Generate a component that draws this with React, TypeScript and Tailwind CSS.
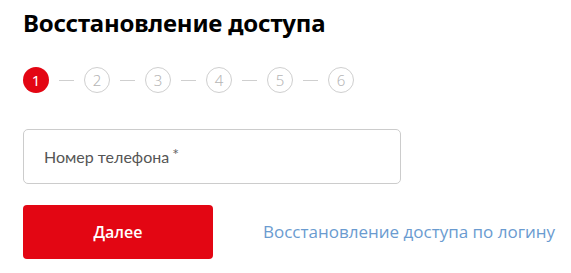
import React from "react";

export default function App() {
  const steps = [1, 2, 3, 4, 5, 6];
  return (
    <div className="w-[571px] h-[273px] bg-white pl-[23px] pt-[6px] overflow-hidden" style={{ fontFamily: "'Open Sans', sans-serif" }}>
      <h1 className="text-[24px] font-bold leading-[34px] text-black tracking-[-0.2px]" style={{ fontFamily: "'Noto Sans', sans-serif" }}>
        Восстановление доступа
      </h1>
      <div className="flex items-center mt-[27px] h-[26px]">
        {steps.map((s, i) => (
          <React.Fragment key={s}>
            {i > 0 && <div className="w-[15px] h-px bg-[#cfcfcf] mx-[10px]" />}
            {i === 0 ? (
              <div className="w-[26px] h-[26px] rounded-full bg-[#e30613] text-white flex items-center justify-center text-[15px]" style={{ fontFamily: "'Noto Sans', sans-serif" }}>
                {s}
              </div>
            ) : (
              <div className="w-[26px] h-[26px] rounded-full border border-[#cfcfcf] text-[#b5b5b5] flex items-center justify-center text-[15px] font-light" style={{ fontFamily: "'Noto Sans', sans-serif" }}>
                {s}
              </div>
            )}
          </React.Fragment>
        ))}
      </div>
      <div className="mt-[36px] w-[378px] h-[55px] border border-[#cccccc] rounded-[5px] flex items-center pl-[20px]">
        <span className="text-[16px] text-[#555555] flex items-start" style={{ fontFamily: "Lato, 'Open Sans', sans-serif" }}>
          Номер телефона
          <span className="text-[16px] leading-[18px] text-[#666666] ml-[3px]">*</span>
        </span>
      </div>
      <div className="flex items-center mt-[21px]">
        <button className="w-[190px] h-[54px] rounded-[4px] bg-[#e30613] text-white text-[16px] font-semibold">
          Далее
        </button>
        <a className="ml-[50px] text-[17px] text-[#6a9bd0]">Восстановление доступа по логину</a>
      </div>
    </div>
  );
}
